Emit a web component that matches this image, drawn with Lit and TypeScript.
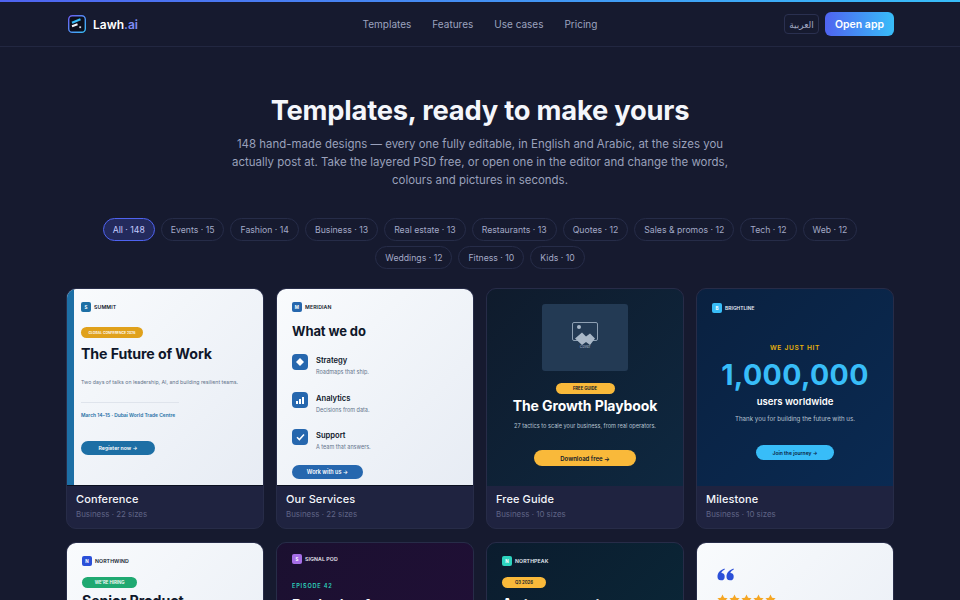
import { LitElement, html, css } from "lit";
import { customElement } from "lit/decorators.js";

const chips1 = ["All · 148","Events · 15","Fashion · 14","Business · 13","Real estate · 13","Restaurants · 13","Quotes · 12","Sales & promos · 12","Tech · 12","Web · 12"];
const chips2 = ["Weddings · 12","Fitness · 10","Kids · 10"];
const star = html`<svg width="11" height="11" viewBox="0 0 24 24"><path d="M12 1l3.400 7.200 7.800 1-5.700 5.400 1.500 7.800L12 18.600l-7 3.800 1.500-7.800L.8 9.200l7.800-1z" fill="#f5a623"/></svg>`;

@customElement("app-root")
export class AppRoot extends LitElement {
  static styles = css`
    :host { display:block; height:100vh; overflow:hidden; background:#161a2f; font-family:Inter,"Liberation Sans",sans-serif; color:#fff; }
    .bar { height:2px; background:linear-gradient(90deg,#4f63f0,#38bdf8); }
    header { height:44px; border-bottom:1px solid #222741; display:grid; grid-template-columns:1fr auto 1fr; align-items:center; padding:0 66px; }
    .brand { display:flex; align-items:center; gap:7px; margin-left:2px; font-size:12px; font-weight:600; }
    .brand i { font-style:normal; color:#7f8cf5; }
    .logo { width:18px; height:18px; display:block; }
    nav { display:flex; gap:21px; font-size:10px; color:#9ca3bf; }
    .right { justify-self:end; display:flex; align-items:center; gap:6px; }
    .lang { height:20px; width:35px; box-sizing:border-box; border:1px solid #2a3050; border-radius:4px; font:9px "Noto Sans","DejaVu Sans",sans-serif; color:#a3a9c2; display:flex; align-items:center; justify-content:center; }
    .open { height:24px; width:69px; border-radius:6px; background:linear-gradient(90deg,#4f63f0,#38bdf8); font-size:10.500px; font-weight:600; display:flex; align-items:center; justify-content:center; }
    .hero { text-align:center; padding-top:47px; }
    h1 { margin:0; font-size:27.300px; line-height:34px; font-weight:700; color:#f4f6fb; letter-spacing:-.2px; }
    .hero p { margin:7px auto 0; width:505px; font-size:11.430px; line-height:18px; color:#9aa1bb; letter-spacing:.02px; }
    .chips { margin-top:29px; display:flex; flex-direction:column; gap:5px; align-items:center; }
    .row { display:flex; gap:6px; justify-content:center; }
    .chip { height:23px; box-sizing:border-box; border:1px solid #262c48; border-radius:12px; padding:0 9px; font-size:8.700px; color:#a3a9c6; display:flex; align-items:center; white-space:nowrap; }
    .chip.on { background:#232a5c; border-color:#4f63f0; color:#c4cbff; }
    .grid { margin:19px 66px 0; display:grid; grid-template-columns:repeat(4,198px); gap:13px 12px; }
    .card { height:241px; box-sizing:border-box; border:1px solid #272c48; border-radius:10px; overflow:hidden; background:#1f2340; display:flex; flex-direction:column; }
    .poster { height:197px; flex:none; box-sizing:border-box; display:flex; flex-direction:column; overflow:hidden; }
    .light { background:linear-gradient(135deg,#f9fbfd,#e7ecf4); color:#0f172a; border-bottom:1px solid #0b1020; }
    .cap { padding:6px 9px; }
    .cap h3 { margin:0; font-size:11px; line-height:14px; font-weight:500; color:#f4f6fb; letter-spacing:.1px; }
    .cap div { margin-top:2px; font-size:7.900px; line-height:12px; color:#5f6486; }
    .mark { display:flex; align-items:center; gap:3px; font-size:5.200px; font-weight:600; letter-spacing:.1px; }
    .mark span { width:10px; height:10px; border-radius:2px; display:flex; align-items:center; justify-content:center; color:#fff; font-size:4.500px; font-weight:700; }
    .pill { align-self:flex-start; border-radius:6px; height:11px; font-size:4.300px; font-weight:600; color:#fff; display:flex; align-items:center; justify-content:center; white-space:nowrap; }
    .btn { border-radius:8px; font-size:5.500px; font-weight:600; display:flex; align-items:center; justify-content:center; }
    .t { font-size:14.200px; font-weight:700; line-height:18px; letter-spacing:-.1px; white-space:nowrap; }
    /* conference */
    .conf { flex-direction:row; }
    .accent { width:7px; background:#1d6fa5; flex:none; }
    .conf .in { padding:13px 0 0 7px; display:flex; flex-direction:column; flex:1; }
    .conf .pill { background:#e0a11b; margin-top:15px; width:62px; font-size:3.400px; }
    .conf .t { margin-top:7px; }
    .conf .s { margin-top:15px; font-size:5.200px; line-height:8px; color:#64748b; }
    .conf hr { margin:16px 0 0; border:0; height:1px; width:98px; background:#dfe4ec; }
    .conf .d { margin-top:8px; font-size:4.900px; line-height:8px; font-weight:600; color:#1d6fa5; }
    .conf .btn { margin-top:22px; width:74px; height:14px; background:#1d6fa5; color:#fff; font-size:5.200px; }
    /* services */
    .serv { padding:13px 0 0 15px; }
    .serv .t { margin-top:10px; font-size:13px; }
    .item { display:flex; gap:8px; margin-top:11.500px; height:26px; }
    .item.first { margin-top:14px; }
    .ic { width:16px; height:16px; border-radius:4px; background:#2667ae; flex:none; display:flex; align-items:center; justify-content:center; }
    .item b { display:block; font-size:7.600px; line-height:10px; font-weight:600; margin-top:2px; }
    .item small { display:block; font-size:5.500px; line-height:8px; color:#64748b; margin-top:2px; }
    .serv .btn { margin-top:10px; width:71px; height:14px; background:#2667ae; color:#fff; }
    /* guide */
    .dark { color:#fff; }
    .guide { background:linear-gradient(135deg,#0f1b2c,#0e2840); align-items:center; padding-top:15px; }
    .cover { width:86px; height:67px; flex:none; box-sizing:border-box; padding-bottom:5px; border-radius:3px; background:#233a54; display:flex; flex-direction:column; align-items:center; justify-content:center; }
    .cover svg { display:block; }
    .cover em { font-style:normal; font-size:3.800px; line-height:5px; color:#a9b8c8; margin-top:-2px; }
    .guide .pill { align-self:center; background:#f9b93a; color:#0f172a; margin-top:12px; width:59px; font-size:4.200px; font-weight:700; }
    .guide .t { margin-top:3px; font-size:14px; }
    .guide .s { margin-top:7px; font-size:5.600px; line-height:8px; color:#b6c2d0; }
    .guide .btn { margin-top:20px; width:102px; height:16px; background:#f9b93a; color:#0f172a; font-size:6px; flex:none; }
    /* milestone */
    .mile { background:linear-gradient(135deg,#0a2140,#0a2a52); align-items:center; padding-top:14px; }
    .mile .mark { align-self:flex-start; margin-left:15px; color:#e6edf5; font-size:4.800px; }
    .mile .k { margin-top:31px; font-size:6.600px; line-height:8px; font-weight:600; letter-spacing:.7px; color:#eab308; }
    .mile .n { margin-top:5px; font-size:28.500px; line-height:36px; font-weight:700; color:#38bdf8; letter-spacing:.4px; }
    .mile .u { margin-top:3px; font-size:9.600px; line-height:12px; font-weight:600; }
    .mile .s { margin-top:7px; font-size:6.200px; line-height:8px; color:#b6c2d0; }
    .mile .btn { margin-top:22px; width:78px; height:15px; background:#38bdf8; color:#0a2140; font-size:5px; flex:none; }
    /* row 2 */
    .hire { padding:13px 0 0 15px; }
    .hire .pill { background:#1fa971; margin-top:11px; width:55px; }
    .hire .t { margin-top:4px; }
    .pod { background:linear-gradient(135deg,#1b1030,#220f38); padding:11px 0 0 15px; }
    .pod .mark { color:#e8e6f0; }
    .pod .k { margin-top:18px; font-size:5.600px; line-height:8px; font-weight:600; letter-spacing:.8px; color:#2dd4bf; }
    .pod .t { margin-top:6px; }
    .peak { background:linear-gradient(135deg,#0b1c2e,#0a2a3a); padding:13px 0 0 15px; }
    .peak .mark { color:#e6edf5; }
    .peak .pill { background:#f9b93a; color:#0f172a; margin-top:11px; width:44px; }
    .peak .t { margin-top:7px; }
    .quote { padding:25px 0 0 20px; }
    .q { display:block; }
    .stars { margin-top:13px; display:flex; gap:1px; }
    .stars svg { display:block; flex:none; }
  `;

  card(poster: unknown, title: string, sub: string) {
    return html`<div class="card">${poster}<div class="cap"><h3>${title}</h3><div>${sub}</div></div></div>`;
  }
  mark(letter: string, name: string, color: string) {
    return html`<div class="mark"><span style="background:${color}">${letter}</span>${name}</div>`;
  }
  render() {
    return html`
      <div class="bar"></div>
      <header>
        <div class="brand">
          <svg class="logo" viewBox="0 0 18 18">
            <defs><linearGradient id="lg" x1="0" y1="0" x2="1" y2="1"><stop offset="0" stop-color="#6b5cf0"/><stop offset="1" stop-color="#38bdf8"/></linearGradient></defs>
            <rect x=".7" y=".7" width="16.600" height="16.600" rx="3.600" fill="#0c0f1c" stroke="url(#lg)" stroke-width="1.400"/>
            <path d="M4 7.700 12.500 4.300" stroke="#38bdf8" stroke-width="2.200" fill="none"/>
            <path d="M4 11.300 9.500 9.300" stroke="#f4f6fb" stroke-width="2" fill="none"/>
            <rect x="11.300" y="11.300" width="1.800" height="1.800" fill="#cbd5e1"/>
          </svg>
          <span>Lawh<i>.ai</i></span>
        </div>
        <nav><span>Templates</span><span>Features</span><span>Use cases</span><span>Pricing</span></nav>
        <div class="right"><div class="lang" dir="rtl">العربية</div><div class="open">Open app</div></div>
      </header>
      <section class="hero">
        <h1>Templates, ready to make yours</h1>
        <p>148 hand-made designs — every one fully editable, in English and Arabic, at the sizes you actually post at. Take the layered PSD free, or open one in the editor and change the words, colours and pictures in seconds.</p>
      </section>
      <div class="chips">
        <div class="row">${chips1.map((c, i) => html`<div class="chip ${i === 0 ? "on" : ""}">${c}</div>`)}</div>
        <div class="row">${chips2.map((c) => html`<div class="chip">${c}</div>`)}</div>
      </div>
      <div class="grid">
        ${this.card(html`<div class="poster light conf"><div class="accent"></div><div class="in">
          ${this.mark("S", "SUMMIT", "#1d6fa5")}
          <div class="pill">GLOBAL CONFERENCE 2026</div>
          <div class="t">The Future of Work</div>
          <div class="s">Two days of talks on leadership, AI, and building resilient teams.</div>
          <hr />
          <div class="d">March 14–15 · Dubai World Trade Centre</div>
          <div class="btn">Register now →</div>
        </div></div>`, "Conference", "Business · 22 sizes")}
        ${this.card(html`<div class="poster light serv">
          ${this.mark("M", "MERIDIAN", "#2667ae")}
          <div class="t">What we do</div>
          <div class="item first"><div class="ic"><svg width="8" height="8" viewBox="0 0 8 8"><path d="M4 0 8 4 4 8 0 4Z" fill="#fff"/></svg></div><div><b>Strategy</b><small>Roadmaps that ship.</small></div></div>
          <div class="item"><div class="ic"><svg width="8" height="8" viewBox="0 0 8 8"><path d="M0 5h2v3H0zM3 3h2v5H3zM6 1h2v7H6z" fill="#fff"/></svg></div><div><b>Analytics</b><small>Decisions from data.</small></div></div>
          <div class="item"><div class="ic"><svg width="9" height="8" viewBox="0 0 9 8"><path d="M1 4.200 3.400 6.600 8 1.600" fill="none" stroke="#fff" stroke-width="1.500"/></svg></div><div><b>Support</b><small>A team that answers.</small></div></div>
          <div class="btn">Work with us →</div>
        </div>`, "Our Services", "Business · 22 sizes")}
        ${this.card(html`<div class="poster dark guide">
          <div class="cover">
            <svg width="28" height="24" viewBox="0 0 28 24">
              <rect x="1.500" y=".5" width="25" height="18" rx="1.500" fill="none" stroke="#8ea0b3" stroke-width="1"/>
              <circle cx="8" cy="5" r="2" fill="#a9b8c8"/>
              <path d="M4 16.500 11 10.500 15 14.500 19 11.500 24 16.500 19 23 15 20 11 23Z" fill="#a9b8c8"/>
            </svg>
            <em>Cover</em>
          </div>
          <div class="pill">FREE GUIDE</div>
          <div class="t">The Growth Playbook</div>
          <div class="s">27 tactics to scale your business, from real operators.</div>
          <div class="btn">Download free →</div>
        </div>`, "Free Guide", "Business · 10 sizes")}
        ${this.card(html`<div class="poster dark mile">
          ${this.mark("B", "BRIGHTLINE", "#38bdf8")}
          <div class="k">WE JUST HIT</div>
          <div class="n">1,000,000</div>
          <div class="u">users worldwide</div>
          <div class="s">Thank you for building the future with us.</div>
          <div class="btn">Join the journey →</div>
        </div>`, "Milestone", "Business · 10 sizes")}
        ${this.card(html`<div class="poster light hire">
          ${this.mark("N", "NORTHWIND", "#2b50d8")}
          <div class="pill">WE'RE HIRING</div>
          <div class="t">Senior Product</div>
        </div>`, "Hiring", "Business · 10 sizes")}
        ${this.card(html`<div class="poster dark pod">
          ${this.mark("S", "SIGNAL POD", "#a66ee6")}
          <div class="k">EPISODE 42</div>
          <div class="t">Designing for</div>
        </div>`, "Podcast", "Business · 10 sizes")}
        ${this.card(html`<div class="poster dark peak">
          ${this.mark("N", "NORTHPEAK", "#2dd4bf")}
          <div class="pill">Q3 2026</div>
          <div class="t">A strong quarter</div>
        </div>`, "Results", "Business · 10 sizes")}
        ${this.card(html`<div class="poster light quote">
          <svg class="q" width="18" height="13" viewBox="0 0 18 13">
            <path d="M7.500 0.500C3 2 0.500 5 0.500 8.500a3.600 3.600 0 1 0 3.800-3.400C4.800 3.700 6 2.500 7.800 1.600ZM16.500 0.500C12 2 9.500 5 9.500 8.500a3.600 3.600 0 1 0 3.800-3.400C13.800 3.700 15 2.500 16.800 1.600Z" fill="#2b50d8"/>
          </svg>
          <div class="stars">${star}${star}${star}${star}${star}</div>
        </div>`, "Testimonial", "Business · 10 sizes")}
      </div>
    `;
  }
}
